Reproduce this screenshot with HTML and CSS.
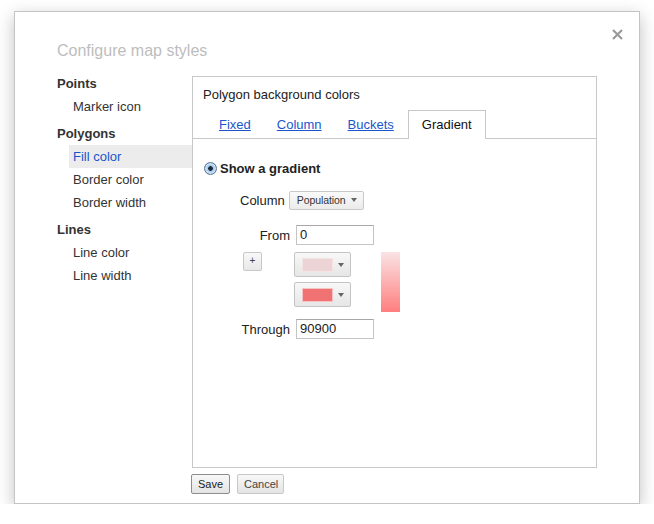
FILE: index.html
```html
<!DOCTYPE html>
<html>
<head>
<meta charset="utf-8">
<title>Configure map styles</title>
<link rel="stylesheet" href="styles.css">
</head>
<body>
<div class="dialog">
  <button class="close" aria-label="Close"><svg width="11" height="11" viewBox="0 0 11 11"><path d="M1 1L10 10M10 1L1 10" stroke="#9a9a9a" stroke-width="2.2" fill="none"/></svg></button>
  <h1 class="title">Configure map styles</h1>
  <div class="content">
    <nav class="nav">
      <div class="nav-head">Points</div>
      <div class="nav-item">Marker icon</div>
      <div class="nav-head spaced">Polygons</div>
      <div class="nav-item selected">Fill color</div>
      <div class="nav-item">Border color</div>
      <div class="nav-item">Border width</div>
      <div class="nav-head spaced">Lines</div>
      <div class="nav-item">Line color</div>
      <div class="nav-item">Line width</div>
    </nav>
    <div class="main">
      <div class="panel">
        <div class="panel-title">Polygon background colors</div>
        <div class="tabs">
          <span class="tab"><a href="#">Fixed</a></span>
          <span class="tab"><a href="#">Column</a></span>
          <span class="tab"><a href="#">Buckets</a></span>
          <span class="tab active">Gradient</span>
        </div>
        <div class="tab-body">
          <div class="radio-row"><span class="radio"></span><span class="radio-label">Show a gradient</span></div>
          <div class="col-row"><span class="label">Column</span><span class="select">Population<i class="caret"></i></span></div>
          <div class="field-row"><span class="field-label">From</span><span class="input">0</span></div>
          <div class="color-area">
            <span class="plus">+</span>
            <div class="color-selects">
              <span class="color-select"><span class="swatch light"></span><i class="caret"></i></span>
              <span class="color-select"><span class="swatch dark"></span><i class="caret"></i></span>
            </div>
            <div class="gradient-bar"></div>
          </div>
          <div class="field-row through"><span class="field-label">Through</span><span class="input">90900</span></div>
        </div>
      </div>
      <div class="footer">
        <button class="btn save">Save</button>
        <button class="btn cancel">Cancel</button>
      </div>
    </div>
  </div>
</div>
</body>
</html>
```

FILE: styles.css
```css
html, body {
  margin: 0;
  padding: 0;
  background: #ffffff;
}
body {
  font-family: "Liberation Sans", Arial, sans-serif;
  font-size: 13px;
  color: #333;
}
.dialog {
  position: relative;
  box-sizing: border-box;
  width: 626px;
  height: 493px;
  margin: 11px 0 0 14px;
  padding: 29px 42px 0 42px;
  background: #fff;
  border: 1px solid #c4c4c4;
  box-shadow: 0 5px 16px rgba(0, 0, 0, 0.25);
}
.close {
  position: absolute;
  top: 17px;
  left: 597px;
  width: 11px;
  height: 11px;
  padding: 0;
  border: 0;
  background: none;
  display: block;
}
.close svg { display: block; }
.title {
  margin: 0 0 12px 0;
  font-size: 16px;
  line-height: 20px;
  font-weight: normal;
  color: #bdbdbd;
}
.content {
  display: flex;
}
.nav {
  width: 135px;
  flex: none;
}
.nav-head {
  font-weight: bold;
  line-height: 22px;
  color: #333;
}
.nav-head.spaced { margin-top: 5px; }
.nav-item {
  margin-left: 12px;
  padding-left: 4px;
  line-height: 23px;
  color: #333;
}
.nav-item.selected {
  background: #ececec;
  color: #1a55cc;
}
.main {
  width: 405px;
  flex: none;
  padding-top: 3px;
}
.panel {
  box-sizing: border-box;
  height: 392px;
  border: 1px solid #c8c8c8;
}
.panel-title {
  padding: 10px 0 0 10px;
  line-height: 16px;
  color: #222;
}
.tabs {
  display: flex;
  margin-top: 7px;
  padding-left: 13px;
  height: 28px;
  border-bottom: 1px solid #c8c8c8;
}
.tab {
  height: 28px;
  line-height: 28px;
  padding: 0 12px;
  border: 1px solid transparent;
  border-bottom: 0;
  margin-bottom: -1px;
}
.tab a {
  color: #1a55cc;
  text-decoration: underline;
}
.tab.active {
  margin-left: 1px;
  padding: 0 13px;
  border-color: #c8c8c8;
  background: #fff;
  color: #111;
}
.tab-body {
  padding-top: 21px;
}
.radio-row {
  display: flex;
  align-items: center;
  height: 16px;
  margin-left: 11px;
}
.radio {
  box-sizing: border-box;
  width: 13px;
  height: 13px;
  border-radius: 50%;
  border: 1px solid #5b7590;
  background: radial-gradient(circle, #1d2a3a 0, #1d2a3a 2px, #9fc4ea 2.6px, #cfe3f7 5px, #7fa8d6 6px);
  margin-right: 3px;
}
.radio-label {
  font-weight: bold;
  color: #222;
}
.col-row {
  display: flex;
  align-items: center;
  height: 20px;
  margin-top: 14px;
  padding-left: 47px;
}
.label { color: #222; }
.select {
  box-sizing: border-box;
  display: flex;
  align-items: center;
  width: 75px;
  height: 19px;
  margin-left: 4px;
  padding: 0 6px 0 7px;
  border: 1px solid #c8c8c8;
  border-radius: 2px;
  background: linear-gradient(#fafafa, #ebebeb);
  font-size: 10.5px;
  letter-spacing: -0.1px;
  color: #333;
}
.caret {
  display: block;
  width: 0;
  height: 0;
  margin-left: auto;
  border-top: 4px solid #666;
  border-left: 3.5px solid transparent;
  border-right: 3.5px solid transparent;
}
.field-row {
  display: flex;
  align-items: center;
  height: 20px;
  margin-top: 15px;
}
.field-row.through { margin-top: 7px; }
.field-label {
  width: 97px;
  text-align: right;
  color: #222;
  margin-right: 6px;
}
.input {
  box-sizing: border-box;
  width: 78px;
  height: 20px;
  padding-left: 3px;
  line-height: 18px;
  border: 1px solid #c4c4c4;
  border-top-color: #a8a8a8;
  color: #222;
}
.color-area {
  display: flex;
  align-items: flex-start;
  margin-top: 7px;
  padding-left: 50px;
}
.plus {
  box-sizing: border-box;
  width: 19px;
  height: 19px;
  border: 1px solid #c8c8c8;
  border-radius: 2px;
  background: linear-gradient(#f8f8f8, #e8e8e8);
  font-size: 10px;
  line-height: 16px;
  text-align: center;
  color: #444;
}
.color-selects {
  display: flex;
  flex-direction: column;
  gap: 5px;
  margin-left: 32px;
}
.color-select {
  box-sizing: border-box;
  display: flex;
  align-items: center;
  width: 57px;
  height: 25px;
  padding: 0 6px 0 7px;
  border: 1px solid #c4c4c4;
  border-radius: 2px;
  background: linear-gradient(#f8f8f8, #e6e6e6);
}
.swatch {
  box-sizing: border-box;
  width: 31px;
  height: 14px;
  border: 1px solid #f6e9e9;
}
.swatch.light { background: #ecd3d5; border-color: #f4e4e4; }
.swatch.dark { background: #f07272; border-color: #f6c4c4; }
.gradient-bar {
  width: 19px;
  height: 60px;
  margin-left: 30px;
  background: linear-gradient(#fae3e4, #ff7e7e);
}
.footer {
  display: flex;
  gap: 7px;
  margin-top: 6px;
  margin-left: -1px;
}
.btn {
  box-sizing: border-box;
  height: 20px;
  padding: 0 6px;
  border: 1px solid #c8c8c8;
  border-radius: 2px;
  background: linear-gradient(#f8f8f8, #e4e4e4);
  font-family: "Liberation Sans", Arial, sans-serif;
  font-size: 11px;
  color: #444;
}
.btn.save {
  width: 39px;
  border-color: #8e8e8e;
  color: #222;
}
.btn.cancel {
  width: 47px;
}
```
